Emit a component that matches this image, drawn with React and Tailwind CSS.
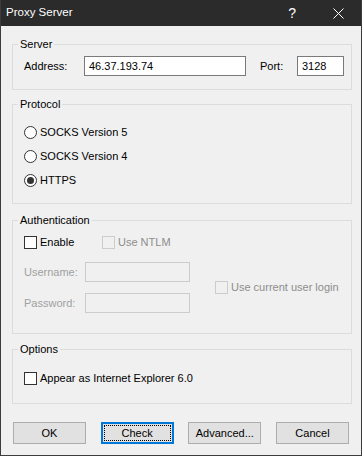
import React from 'react';

const Group = ({ title, className = '', children }) => (
  <fieldset className={`w-[340px] ml-[11px] border border-[#dcdcdc] px-0 ${className}`}>
    <legend className="ml-[5px] px-[2px] leading-[16px]">{title}</legend>
    {children}
  </fieldset>
);

const Check = ({ label, disabled = false, className = '' }) => (
  <div className={`flex items-center h-[16px] ${className}`}>
    <span
      className={`w-[13px] h-[13px] border ${disabled ? 'border-[#cccccc]' : 'border-[#333333] bg-white'}`}
    ></span>
    <span className={`ml-[3px] ${disabled ? 'text-[#8d8d8d]' : ''}`}>{label}</span>
  </div>
);

const Radio = ({ label, checked = false }) => (
  <div className="flex items-center h-[16px]">
    <span className="w-[13px] h-[13px] rounded-full border border-[#333333] bg-white flex items-center justify-center">
      {checked && <span className="w-[7px] h-[7px] rounded-full bg-[#333333]"></span>}
    </span>
    <span className="ml-[3px]">{label}</span>
  </div>
);

const Button = ({ children, focused = false }) =>
  focused ? (
    <button className="w-[73px] h-[22px] bg-[#e1e1e1] border-2 border-[#0078d7] flex p-0">
      <span className="flex-1 self-stretch m-[1px] border border-dotted border-black flex items-center justify-center">
        {children}
      </span>
    </button>
  ) : (
    <button className="w-[73px] h-[22px] bg-[#e1e1e1] border border-[#adadad] flex items-center justify-center">
      {children}
    </button>
  );

export default function App() {
  return (
    <div className="w-[362px] h-[456px] bg-[#f0f0f0] border border-t-0 border-[#3c3c3c] flex flex-col font-['Liberation_Sans',Arial,sans-serif] text-[11px] text-black overflow-hidden">
      {/* title bar */}
      <div className="h-[26px] bg-[#2b2b2b] text-white flex items-center pl-[5px] shrink-0">
        <span className="text-[11.5px]">Proxy Server</span>
        <span className="ml-auto text-[14px] mr-[37px]">?</span>
        <svg width="11" height="11" viewBox="0 0 11 11" className="mr-[17px]">
          <path d="M0.5 0.5 L10.5 10.5 M10.5 0.5 L0.5 10.5" stroke="white" strokeWidth="1" />
        </svg>
      </div>

      <div className="pt-[10px] flex flex-col">
        <Group title="Server" className="pb-[13px]">
          <div className="pt-[4px] pl-[11px] flex items-center h-[24px]">
            <span className="w-[60px]">Address:</span>
            <div className="w-[162px] h-[20px] bg-white border border-[#7a7a7a] flex items-center pl-[4px]">
              46.37.193.74
            </div>
            <span className="ml-[14px] w-[37px]">Port:</span>
            <div className="w-[47px] h-[20px] bg-white border border-[#7a7a7a] flex items-center pl-[4px]">
              3128
            </div>
          </div>
        </Group>

        <Group title="Protocol" className="mt-[6px] pb-[15px]">
          <div className="pt-[12px] pl-[11px] flex flex-col gap-[8px]">
            <Radio label="SOCKS Version 5" />
            <Radio label="SOCKS Version 4" />
            <Radio label="HTTPS" checked />
          </div>
        </Group>

        <Group title="Authentication" className="mt-[8px] pb-[20px]">
          <div className="pt-[6px] pl-[11px]">
            <div className="flex">
              <Check label="Enable" className="w-[78px]" />
              <Check label="Use NTLM" disabled />
            </div>
            <div className="flex items-center mt-[12px]">
              <div className="flex flex-col gap-[11px] text-[#a0a0a0]">
                <div className="flex items-center">
                  <span className="w-[61px]">Username:</span>
                  <div className="w-[105px] h-[20px] border border-[#cccccc]"></div>
                </div>
                <div className="flex items-center">
                  <span className="w-[61px]">Password:</span>
                  <div className="w-[105px] h-[20px] border border-[#cccccc]"></div>
                </div>
              </div>
              <Check label="Use current user login" disabled className="ml-[25px]" />
            </div>
          </div>
        </Group>

        <Group title="Options" className="mt-[7px] pb-[17px]">
          <div className="pt-[13px] pl-[11px]">
            <Check label="Appear as Internet Explorer 6.0" />
          </div>
        </Group>

        <div className="mt-[18px] ml-[12px] w-[336px] flex justify-between">
          <Button>OK</Button>
          <Button focused>Check</Button>
          <Button>Advanced...</Button>
          <Button>Cancel</Button>
        </div>
      </div>
    </div>
  );
}
